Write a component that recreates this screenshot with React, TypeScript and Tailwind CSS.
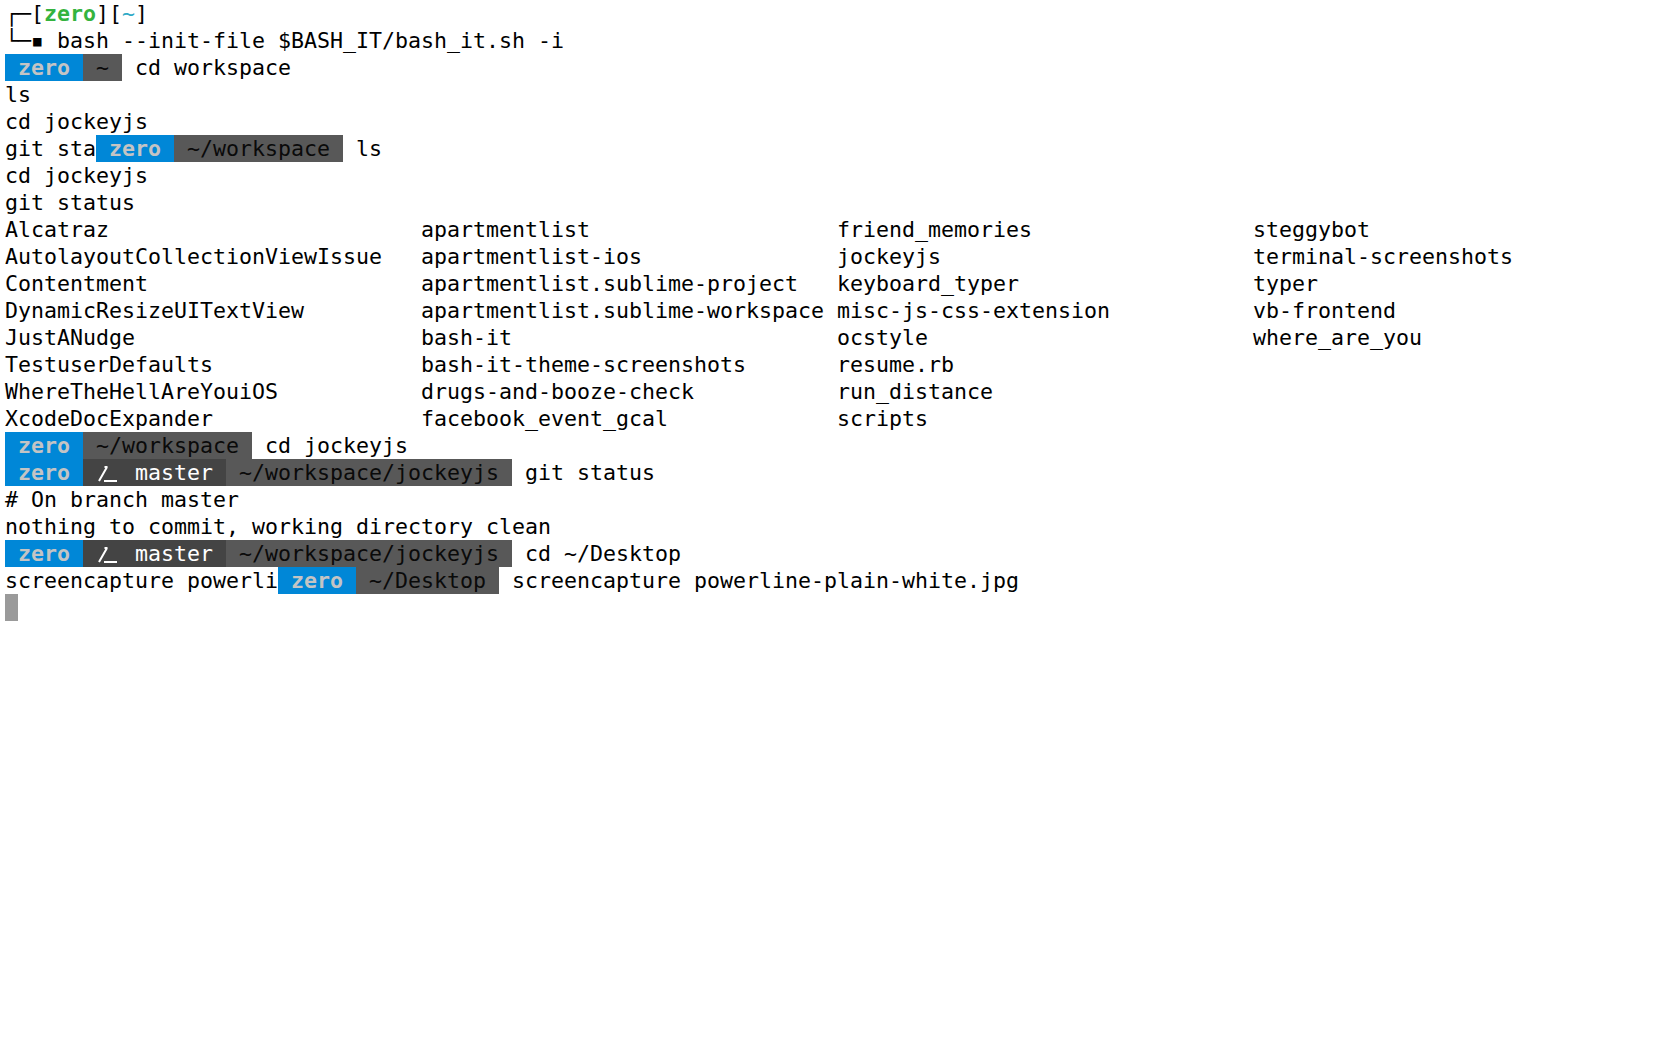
import React from "react";

const LINE = "flex h-[27px] leading-[27px] whitespace-pre";

function User() {
  return <span className="bg-[#0087d7] text-[#c4c4c4] font-bold">{" zero "}</span>;
}

function Cwd({ path }: { path: string }) {
  return <span className="bg-[#585858] text-[#0a0a0a]">{` ${path} `}</span>;
}

function Branch() {
  return (
    <span className="flex bg-[#444444] text-white">
      <span>{" "}</span>
      <svg width="26" height="27" viewBox="0 0 26 27" className="shrink-0">
        <path d="M3 22 L11 8 M8.5 8 H11.5 M8 22 H21" stroke="#ffffff" strokeWidth="2" fill="none" />
      </svg>
      <span>{" master "}</span>
    </span>
  );
}

const lsRows = [
  ["Alcatraz", "apartmentlist", "friend_memories", "steggybot"],
  ["AutolayoutCollectionViewIssue", "apartmentlist-ios", "jockeyjs", "terminal-screenshots"],
  ["Contentment", "apartmentlist.sublime-project", "keyboard_typer", "typer"],
  ["DynamicResizeUITextView", "apartmentlist.sublime-workspace", "misc-js-css-extension", "vb-frontend"],
  ["JustANudge", "bash-it", "ocstyle", "where_are_you"],
  ["TestuserDefaults", "bash-it-theme-screenshots", "resume.rb", ""],
  ["WhereTheHellAreYouiOS", "drugs-and-booze-check", "run_distance", ""],
  ["XcodeDocExpander", "facebook_event_gcal", "scripts", ""],
];

export default function App() {
  return (
    <div className="min-h-screen w-full bg-white text-black font-['DejaVu_Sans_Mono','Liberation_Mono',monospace] text-[21.6px] pl-[5px]">
      {/* old prompt */}
      <div className={LINE}>
        <span>┌─[</span>
        <span className="text-[#34b33e] font-bold">zero</span>
        <span>][</span>
        <span className="text-[#2ea9c6]">~</span>
        <span>]</span>
      </div>
      <div className={LINE}>
        <span>└─▪ bash --init-file $BASH_IT/bash_it.sh -i</span>
      </div>

      <div className={LINE}>
        <User />
        <Cwd path="~" />
        <span>{" cd workspace"}</span>
      </div>
      <div className={LINE}>ls</div>
      <div className={LINE}>cd jockeyjs</div>
      <div className={LINE}>
        <span>git sta</span>
        <User />
        <Cwd path="~/workspace" />
        <span>{" ls"}</span>
      </div>
      <div className={LINE}>cd jockeyjs</div>
      <div className={LINE}>git status</div>

      {/* ls output */}
      {lsRows.map((row, i) => (
        <div key={i} className={LINE}>
          {row.map((name, j) => (
            <span key={j} className="w-[416px] shrink-0">
              {name}
            </span>
          ))}
        </div>
      ))}

      <div className={LINE}>
        <User />
        <Cwd path="~/workspace" />
        <span>{" cd jockeyjs"}</span>
      </div>
      <div className={LINE}>
        <User />
        <Branch />
        <Cwd path="~/workspace/jockeyjs" />
        <span>{" git status"}</span>
      </div>
      <div className={LINE}># On branch master</div>
      <div className={LINE}>nothing to commit, working directory clean</div>
      <div className={LINE}>
        <User />
        <Branch />
        <Cwd path="~/workspace/jockeyjs" />
        <span>{" cd ~/Desktop"}</span>
      </div>
      <div className={LINE}>
        <span>screencapture powerli</span>
        <User />
        <Cwd path="~/Desktop" />
        <span>{" screencapture powerline-plain-white.jpg"}</span>
      </div>
      <div className={LINE}>
        <span className="w-[13px] bg-[#9a9a9a]" />
      </div>
    </div>
  );
}
